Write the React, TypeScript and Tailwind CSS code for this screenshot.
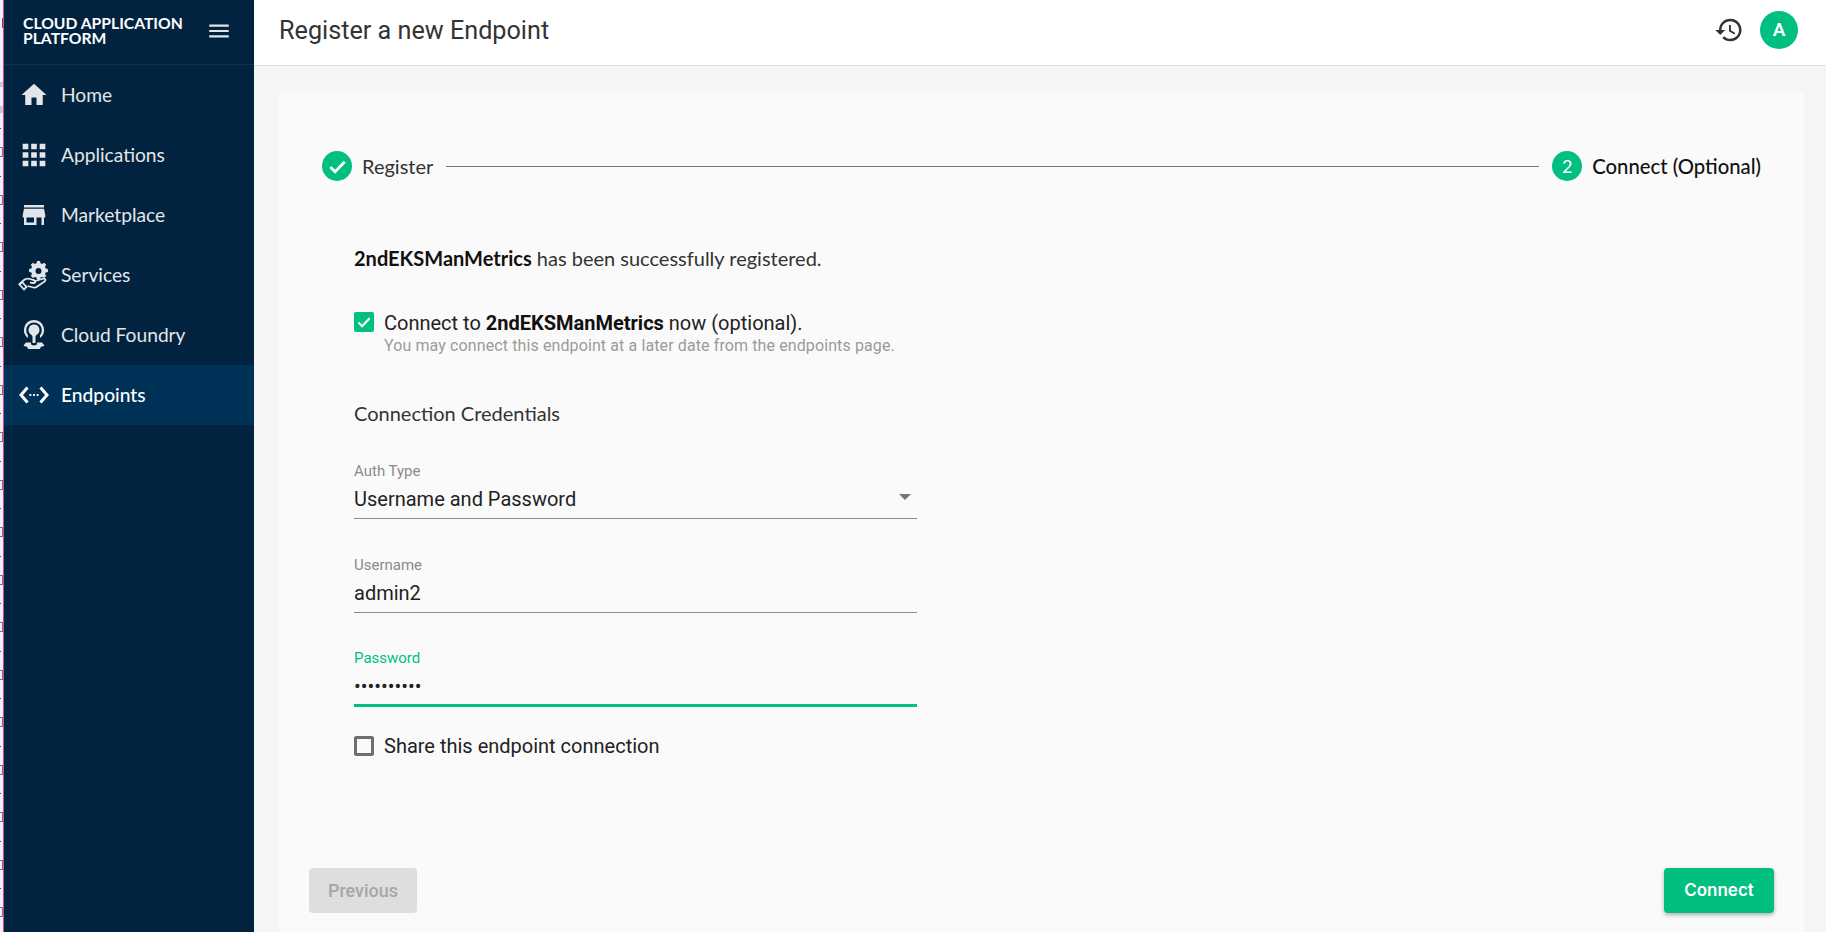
import { MdApps, MdHistory, MdHome, MdMenu, MdStore } from "react-icons/md";

function CheckIcon({ className }: { className: string }) {
  return (
    <svg viewBox="0 0 24 24" className={className} fill="none" stroke="currentColor" strokeWidth="2.800">
      <path d="M4.500 12.500 9.500 17.500 19.500 7" />
    </svg>
  );
}

function ServicesIcon() {
  return (
    <svg viewBox="0 0 32 32" className="w-[32px] h-[32px]" fill="currentColor">
      <path d="M19 2h3l.5 2.2 1.6.7 2-1.2 2.1 2.1-1.2 2 .7 1.6 2.2.5v3l-2.2.5-.7 1.6 1.2 2-2.1 2.1-2-1.2-1.6.7-.5 2.2h-3l-.5-2.2-1.6-.7-2 1.2-2.1-2.1 1.2-2-.7-1.6-2.2-.5v-3l2.2-.5.7-1.6-1.2-2 2.1-2.1 2 1.2 1.6-.7zm1.5 7a3 3 0 1 0 0 6 3 3 0 0 0 0-6z" />
      <path d="M1 25.5 6 21c2-1.7 3.700-1.700 6-1l4 1.200c2 .6 1.500 3-.5 2.800l-3.500-.4" fill="none" stroke="currentColor" strokeWidth="1.800" />
      <path d="m16 22.500 8-2.500c3-1 4.500.8 2.500 2.500l-8 5.500c-1 .7-2 .8-3 .5l-6-1.500" fill="none" stroke="currentColor" strokeWidth="1.800" />
      <path d="m1.500 25.500 4.500 5 2.500-2.500-4.500-5z" fill="none" stroke="currentColor" strokeWidth="1.800" />
    </svg>
  );
}

function FoundryIcon() {
  return (
    <svg viewBox="0 0 32 32" className="w-[32px] h-[32px]" fill="currentColor">
      <path d="M16 1a10 10 0 0 0-6 18v-2.800a7.800 7.800 0 1 1 12 0V19A10 10 0 0 0 16 1z" />
      <path d="M16 5.500a5.500 5.500 0 0 0-2.800 10.200c.8.500 1.300 1.300 1.300 2.300V24h3v-6c0-1 .5-1.800 1.300-2.300A5.500 5.500 0 0 0 16 5.500z" />
      <path d="M8 23.500h5v1.300c0 1 1.300 1.700 3 1.700s3-.7 3-1.700v-1.300h5l2.500 3-2.500 1.200-1-.2-1 2.500h-12l-1-2.500-1 .2-2.500-1.200z" />
    </svg>
  );
}

function EndpointsIcon() {
  return (
    <svg viewBox="0 0 32 32" className="w-[32px] h-[32px]" fill="none" stroke="currentColor" strokeWidth="3">
      <path d="M9.500 8.500 3 16l6.500 7.500" />
      <path d="M22.500 8.500 29 16l-6.500 7.500" />
      <path d="M11.500 16h1.800M15.100 16h1.800M18.700 16h1.800" strokeWidth="2.200" />
    </svg>
  );
}

const navItems = [
  { label: "Home", icon: <MdHome className="w-[30px] h-[30px]" /> },
  { label: "Applications", icon: <MdApps className="w-[34px] h-[34px]" /> },
  { label: "Marketplace", icon: <MdStore className="w-[30px] h-[30px]" /> },
  { label: "Services", icon: <ServicesIcon /> },
  { label: "Cloud Foundry", icon: <FoundryIcon /> },
  { label: "Endpoints", icon: <EndpointsIcon />, active: true },
];

// scraps of the page showing behind the sidebar, one every 47.5px
const stripMarks = Array.from({ length: 17 }, (_, i) => 128 + i * 47.5);

function Field({ label, value, focused }: { label: string; value: string; focused?: boolean }) {
  return (
    <div className="w-[563px] h-[81px] flex flex-col">
      <div className={`h-[20px] mt-[2px] flex items-center text-[15px] ${focused ? "text-[#00bf80]" : "text-[#8a8a8a]"}`}>{label}</div>
      <div className="h-[36px] flex items-center text-[20px] text-[#222]">{value}</div>
      <div className={focused ? "h-[3px] bg-[#00bf80]" : "h-px mt-[1px] bg-[#8c8c8c]"} />
    </div>
  );
}

export default function App() {
  return (
    <div className="h-[932px] w-[1826px] overflow-hidden flex bg-[#f5f5f5] font-['Roboto',sans-serif]">
      {/* page behind the sidebar */}
      <div className="w-[4px] relative bg-[#f0f0f0] border-r-[1px] border-[#d9489c]">
        <div className="absolute left-[2px] top-[18px] w-px h-[10px] bg-[#555]" />
        <div className="absolute left-0 top-[82px] w-[3px] h-[5px] bg-[#c8c8c8]" />
        <div className="absolute left-0 top-[106px] w-[3px] h-[7px] bg-[#c8c8c8]" />
        {stripMarks.map((top) => (
          <div key={top}>
            <div className="absolute left-0 w-px h-px bg-[#444]" style={{ top }} />
            <div className="absolute left-0 w-[3px] h-[10px] border-y border-r border-[#777]" style={{ top: top + 19 }} />
          </div>
        ))}
      </div>

      {/* Sidebar */}
      <aside className="w-[250px] shrink-0 bg-[#01233f] font-['Lato',sans-serif] text-[#e3e6e9]">
        <div className="h-[65px] pl-[19px] pr-[22px] pb-[3px] flex items-center justify-between border-b border-[#0a3352]">
          <div className="text-[15.700px] leading-[15px] font-bold text-white">
            CLOUD APPLICATION
            <br />
            PLATFORM
          </div>
          <MdMenu className="w-[26px] h-[26px]" />
        </div>
        <nav>
          {navItems.map((item) => (
            <div key={item.label} className={`h-[60px] flex items-center text-[19.200px] ${item.active ? "bg-[#003156] text-white font-medium" : ""}`}>
              <div className="w-[57px] pl-[2px] flex justify-center">{item.icon}</div>
              <span>{item.label}</span>
            </div>
          ))}
        </nav>
      </aside>

      <div className="flex-1 min-w-0 flex flex-col">
        {/* Header */}
        <header className="h-[66px] shrink-0 bg-white border-b border-[#dcdcdc] pl-[25px] pr-[28px] pb-[5px] flex items-center justify-between">
          <h1 className="text-[25.200px] mt-[1px] text-[#333]">Register a new Endpoint</h1>
          <div className="flex items-center gap-[16px]">
            <MdHistory className="w-[30px] h-[30px] text-[#333]" />
            <div className="w-[38px] h-[38px] rounded-full bg-[#00bf80] text-white font-semibold text-[19px] flex items-center justify-center">A</div>
          </div>
        </header>

        {/* Card */}
        <main className="flex-1 pt-[25px] pl-[25px] pr-[22px]">
          <div className="bg-[#fafafa] h-full px-[30px] pt-[60px] relative">
            {/* Stepper */}
            <div className="ml-[13px] mr-[13px] h-[30px] flex items-center font-['Lato',sans-serif]">
              <div className="w-[30px] h-[30px] rounded-full bg-[#00bf80] text-white flex items-center justify-center">
                <CheckIcon className="w-[23px] h-[23px]" />
              </div>
              <span className="ml-[10px] text-[20px] text-[#333]">Register</span>
              <div className="flex-1 h-px bg-[#777] mx-[13px]" />
              <div className="w-[30px] h-[30px] rounded-full bg-[#00bf80] text-white text-[18px] flex items-center justify-center">2</div>
              <span className="ml-[10px] text-[20.300px] font-medium text-[#111]">Connect (Optional)</span>
            </div>

            {/* Form */}
            <div className="ml-[45px] mt-[63px]">
              <p className="font-['Lato',sans-serif] text-[20px] leading-[28px] text-[#333]">
                <span className="font-bold text-[#111]">2ndEKSManMetrics</span> has been successfully registered.
              </p>

              <div className="mt-[39px] flex">
                <div className="w-[20px] h-[20px] mt-[1px] rounded-[2px] bg-[#00bf80] text-white flex items-center justify-center">
                  <CheckIcon className="w-[18px] h-[18px]" />
                </div>
                <div className="ml-[10px]">
                  <div className="text-[20px] leading-[24px] text-[#222]">
                    Connect to <span className="font-bold text-[#111]">2ndEKSManMetrics</span> now (optional).
                  </div>
                  <div className="text-[16px] tracking-[0.11px] leading-[22px] text-[#9a9a9a]">You may connect this endpoint at a later date from the endpoints page.</div>
                </div>
              </div>

              <h2 className="mt-[43px] font-['Lato',sans-serif] text-[20px] leading-[26px] text-[#333]">Connection Credentials</h2>

              <div className="mt-[33px] flex flex-col">
                <div className="relative w-fit">
                  <Field label="Auth Type" value="Username and Password" />
                  <div className="absolute right-[6px] top-[35px] border-x-[6.500px] border-x-transparent border-t-[6.500px] border-t-[#757575]" />
                </div>
                <div className="h-[13px]" />
                <Field label="Username" value="admin2" />
                <div className="h-[12px]" />
                <Field label="Password" value="••••••••••" focused />
              </div>

              <div className="mt-[4px] flex items-center">
                <div className="w-[20px] h-[20px] rounded-[2px] border-[3px] border-[#6f6f6f]" />
                <span className="ml-[10px] text-[20px] text-[#222]">Share this endpoint connection</span>
              </div>
            </div>

            {/* Footer buttons */}
            <div className="absolute left-[30px] right-[30px] top-[777px] flex justify-between text-[18px]">
              <button className="w-[108px] h-[45px] rounded-[4px] bg-[#dedede] text-[#a6a6a6] font-medium">Previous</button>
              <button className="w-[110px] h-[45px] rounded-[4px] bg-[#00bf80] text-white font-semibold font-['Inter',sans-serif] text-[17px] shadow-[0_2px_4px_rgba(0,0,0,0.3)]">Connect</button>
            </div>
          </div>
        </main>
      </div>
    </div>
  );
}
